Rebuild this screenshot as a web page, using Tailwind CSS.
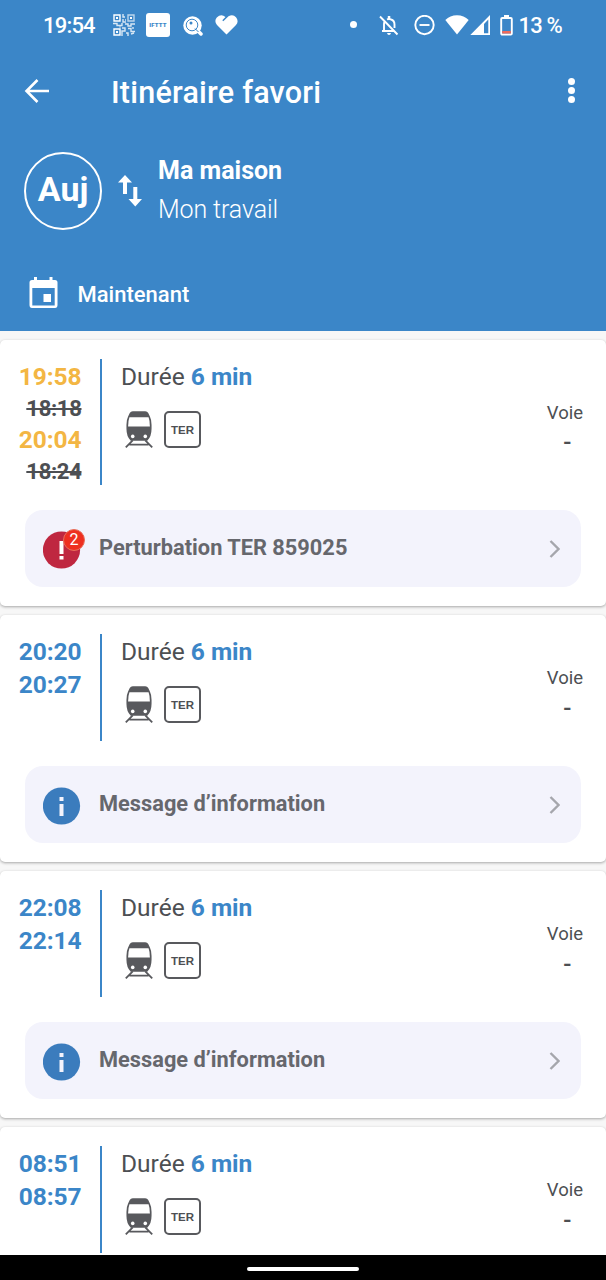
<!DOCTYPE html>
<html lang="fr">
<head>
<meta charset="utf-8">
<title>Itinéraire favori</title>
<script src="https://cdn.jsdelivr.net/npm/@tailwindcss/browser@4"></script>
</head>
<body class="w-[606px] h-[1280px] overflow-hidden bg-[#f7f7f7] font-['Roboto',sans-serif] text-[#4d4f53] flex flex-col">
<svg class="hidden">
  <symbol id="train" viewBox="75 32 84 112">
    <path fill="#58595d" d="M98 33h38q6 0 9 5l5 11q5 10 5 25v12q0 24-13 36H92q-13-12-13-36V74q0-15 5-25l5-11q3-5 9-5z"/>
    <path fill="#fff" d="M88 51h58q4 11 4 28H84q0-17 4-28z"/>
    <circle cx="98" cy="109" r="5.500" fill="#fff"/><circle cx="136" cy="109" r="5.500" fill="#fff"/>
    <path fill="none" stroke="#58595d" stroke-width="5.500" d="M98 121 77 142M136 121l21 21M88 134h58"/>
  </symbol>
  <symbol id="info" viewBox="0 0 38 38"><circle cx="18.500" cy="19" r="18.600" fill="#3b7cbd"/><path fill="#f3f3fc" d="M16.500 10h4v4h-4zM16.500 17h4v12h-4z"/></symbol>
  <symbol id="chev" viewBox="0 0 12 20"><path d="M2.500 2 10.500 10l-8 8" fill="none" stroke="#a5a6ac" stroke-width="2.400"/></symbol>
</svg>

<header class="h-[331px] shrink-0 bg-[#3b86c8] text-white flex flex-col">
  <div class="h-[50px] flex items-center pl-[43px] pr-[44px] text-[22px] font-medium">
    <span class="w-[70px] mt-px tracking-[-0.8px]">19:54</span>
    <svg class="w-[22px] h-[22px] shrink-0" viewBox="0 0 22 22" fill="none" stroke="#fff" stroke-width="1.400">
      <path d="M1 1h6v6H1zM1 15h6v6H1z"/><path opacity=".65" d="M15 1h6v6h-6z"/>
      <path stroke-width="2" d="M3 4h2M3 18h2M17 4h2"/>
      <path opacity=".8" d="M10 0v3h2M10 5v3h3M0 9.500h4v2h5V9M12 10h3v2h3v-2h4M9 14h3v3H9v5M13 19h2v3M15 14.500h3v3h4M18 20l3-1M7 12.500v1M20 13v2M12 6h1"/>
    </svg>
    <span class="ml-[11px] size-[24px] shrink-0 rounded-[3px] bg-white text-[#3b86c8] text-[6px] leading-[24px] font-black text-center tracking-[0.2px]">IFTTT</span>
    <svg class="ml-[13px] w-[20px] h-[22px] shrink-0" viewBox="0 0 20 22">
      <circle cx="9.500" cy="11.500" r="9.200" fill="#fff"/><path d="m14 16 4 4" stroke="#fff" stroke-width="3.500" stroke-linecap="round"/>
      <circle cx="9" cy="11" r="5.800" fill="none" stroke="#3b86c8" stroke-width="1"/><circle cx="8" cy="9" r="1.500" fill="#3b86c8"/><path d="m12 14.500 3.500 3.500" stroke="#3b86c8"/>
    </svg>
    <svg class="ml-[12px] w-[23px] h-[20px] shrink-0" viewBox="0 0 23 20"><path fill="#fff" d="M11.500 19.500 2 10Q-1.200 6 1.800 2.500 6-1.500 10.500 2L7.300 5.200 8.300 6.200 13.500 1.200Q18-1.200 21 2.200q3.200 4 0 7.800z"/></svg>
    <span class="ml-auto -mt-[2px] size-[7px] rounded-full bg-white"></span>
    <svg class="ml-[22px] w-[20px] h-[21px] shrink-0" viewBox="0 0 20 21" fill="none" stroke="#fff" stroke-width="1.900"><path d="M1 1.500 18.500 19.500M3 16h12M5 16V9q0-2 1-3M8 4.500q2-1 4 0 3.500 1 3.500 5V13"/><path fill="#fff" stroke="none" d="M8.800 1h2.500v3H8.800zM8 18h4q-.5 2-2 2t-2-2z"/></svg>
    <svg class="ml-[15px] w-[21px] h-[21px] shrink-0" viewBox="0 0 21 21" fill="none" stroke="#fff" stroke-width="1.900"><circle cx="10.500" cy="10" r="9.200"/><path d="M5.500 10h10"/></svg>
    <svg class="ml-[10px] w-[24px] h-[20px] shrink-0" viewBox="0 0 24 20"><path fill="#fff" d="M12 19.500.3 5Q5 .2 12 .2T23.700 5z"/></svg>
    <svg class="ml-px w-[21px] h-[20px] shrink-0" viewBox="0 0 21 20"><path fill="#fff" d="M20 0V20H.300zM18.300 4.500l-4.300 4.500v9.300h4.300z" fill-rule="evenodd"/></svg>
    <svg class="ml-[9px] w-[13px] h-[21px] shrink-0" viewBox="0 0 13 21"><path fill="#fff" d="M4 0h5v3H4z"/><rect x="1.200" y="3" width="10.600" height="16.500" rx="1" fill="none" stroke="#fff" stroke-width="1.900"/><path fill="#ee6a5c" d="M2.200 16h8.600v2.500H2.200z"/></svg>
    <span class="ml-[6px] mt-px whitespace-nowrap tracking-[-0.800px]">13 %</span>
  </div>

  <div class="h-[84px] flex items-center pl-[24px] pr-[31px]">
    <svg class="w-[26px] h-[26px] -mt-[3px]" viewBox="0 0 26 26" fill="none" stroke="#fff" stroke-width="2.600"><path d="M25 13H3M13.500 2 2.500 13l11 11"/></svg>
    <h1 class="ml-[61px] mt-px text-[30.500px] leading-[36px] font-medium whitespace-nowrap tracking-[0.220px]">Itinéraire favori</h1>
    <div class="ml-auto flex flex-col gap-[2.500px] -mt-[3px]"><i class="size-[6.800px] rounded-full bg-white"></i><i class="size-[6.800px] rounded-full bg-white"></i><i class="size-[6.800px] rounded-full bg-white"></i></div>
  </div>

  <div class="h-[114px] flex items-center pl-[24px]">
    <div class="size-[78px] rounded-full border-2 border-white text-[34px] font-bold text-center leading-[71px]">Auj</div>
    <svg class="ml-[16px] w-[25px] h-[32px]" viewBox="0 0 25 32"><path fill="#fff" d="M7 0l7 7.500H9V19H5V7.500H0zM15.300 12h4v12H24l-6.700 7.500L10.500 24h4.800z"/></svg>
    <div class="ml-[15px] -mt-[2px]">
      <div class="text-[25px] leading-[39px] font-bold whitespace-nowrap">Ma maison</div>
      <div class="text-[25px] leading-[39px] font-light whitespace-nowrap tracking-[-0.1px]">Mon travail</div>
    </div>
  </div>

  <div class="h-[83px] pt-[10px] flex items-center pl-[29px] text-[22px] font-medium">
    <svg class="w-[29px] h-[32px] -mt-[4px]" viewBox="0 0 29 32"><path fill="#fff" fill-rule="evenodd" d="M5 0h3v3h12.500V0h3v3H26q2.500 0 2.500 2.500V28q0 3-2.500 3H3q-2.500 0-2.500-3V5.500Q.5 3 3 3h2zM3.300 11v17.500h22.400V11zM14.500 17H22v8h-7.500z"/></svg>
    <span class="ml-[19.500px]">Maintenant</span>
  </div>
</header>

<main class="h-[924px] shrink-0 overflow-hidden pt-[9px] flex flex-col gap-[9px]">
  <section class="h-[266px] shrink-0 rounded-[5px] bg-white pt-[19px] shadow-[0_1px_3px_rgba(0,0,0,0.33)]">
    <div class="h-[126px] flex pr-[23px]">
      <div class="w-[102px] border-r-2 border-[#3b86c8] pr-[18.500px] pt-[2px] text-right text-[24.500px] leading-[31.500px] font-bold text-[#f3b643] tracking-[-0.100px]">
        <div>19:58</div><div class="text-[22px] text-[#4d4f53] line-through decoration-[1.500px] tracking-[-0.300px]">18:18</div><div>20:04</div><div class="text-[22px] text-[#4d4f53] line-through decoration-[1.500px] tracking-[-0.300px]">18:24</div>
      </div>
      <div class="pl-[19px]">
        <div class="pt-px text-[24.500px] leading-[34px] whitespace-nowrap">Durée <b class="text-[#3b86c8]">6 min</b></div>
        <div class="mt-[17px] pl-[4px] flex gap-[11px]"><svg class="w-[28px] h-[37px]"><use href="#train"/></svg><span class="size-[37px] rounded-[5px] border-2 border-[#58595d] text-[11.500px] leading-[34px] text-center font-bold font-['Liberation_Sans',sans-serif]">TER</span></div>
      </div>
      <div class="ml-auto self-center pt-[12px] text-center leading-[29.500px]"><div class="text-[18.500px]">Voie</div><div class="pl-[5px] text-[24px] font-medium">-</div></div>
    </div>
    <div class="mt-[25px] mx-[25px] h-[77px] rounded-[18px] bg-[#f3f3fc] flex items-center pl-[18px] pr-[21px] text-[21.800px] font-bold text-[#66676d]">
      <div class="relative mt-[3px] size-[38px]">
        <svg class="size-[38px]" viewBox="0 0 38 38"><circle cx="18.500" cy="19" r="18.600" fill="#bf2740"/><path fill="#fff" d="M16.500 10h4v13h-4zM16.500 25h4v3.500h-4z"/></svg>
        <span class="absolute -top-[2px] left-[20px] size-[22px] rounded-full bg-[#ee2f20] border border-[#e8705c] text-white text-[16px] leading-[20px] font-normal text-center">2</span>
      </div>
      <span class="ml-[18px] whitespace-nowrap">Perturbation TER 859025</span>
      <svg class="ml-auto w-[12px] h-[20px]"><use href="#chev"/></svg>
    </div>
  </section>

  <section class="h-[247px] shrink-0 rounded-[5px] bg-white pt-[19px] shadow-[0_1px_3px_rgba(0,0,0,0.33)]">
    <div class="h-[107px] flex pr-[23px]">
      <div class="w-[102px] border-r-2 border-[#3b86c8] pr-[18.500px] pt-px text-right text-[24.500px] leading-[33px] font-bold text-[#3b86c8] tracking-[-0.100px]"><div>20:20</div><div>20:27</div></div>
      <div class="pl-[19px]">
        <div class="pt-px text-[24.500px] leading-[34px] whitespace-nowrap">Durée <b class="text-[#3b86c8]">6 min</b></div>
        <div class="mt-[17px] pl-[4px] flex gap-[11px]"><svg class="w-[28px] h-[37px]"><use href="#train"/></svg><span class="size-[37px] rounded-[5px] border-2 border-[#58595d] text-[11.500px] leading-[34px] text-center font-bold font-['Liberation_Sans',sans-serif]">TER</span></div>
      </div>
      <div class="ml-auto self-center pt-[12px] text-center leading-[29.500px]"><div class="text-[18.500px]">Voie</div><div class="pl-[5px] text-[24px] font-medium">-</div></div>
    </div>
    <div class="mt-[25px] mx-[25px] h-[77px] rounded-[18px] bg-[#f3f3fc] flex items-center pl-[18px] pr-[21px] text-[21.800px] font-bold text-[#66676d]">
      <svg class="mt-[3px] size-[38px]"><use href="#info"/></svg>
      <span class="ml-[18px] whitespace-nowrap">Message d’information</span>
      <svg class="ml-auto w-[12px] h-[20px]"><use href="#chev"/></svg>
    </div>
  </section>

  <section class="h-[247px] shrink-0 rounded-[5px] bg-white pt-[19px] shadow-[0_1px_3px_rgba(0,0,0,0.33)]">
    <div class="h-[107px] flex pr-[23px]">
      <div class="w-[102px] border-r-2 border-[#3b86c8] pr-[18.500px] pt-px text-right text-[24.500px] leading-[33px] font-bold text-[#3b86c8] tracking-[-0.100px]"><div>22:08</div><div>22:14</div></div>
      <div class="pl-[19px]">
        <div class="pt-px text-[24.500px] leading-[34px] whitespace-nowrap">Durée <b class="text-[#3b86c8]">6 min</b></div>
        <div class="mt-[17px] pl-[4px] flex gap-[11px]"><svg class="w-[28px] h-[37px]"><use href="#train"/></svg><span class="size-[37px] rounded-[5px] border-2 border-[#58595d] text-[11.500px] leading-[34px] text-center font-bold font-['Liberation_Sans',sans-serif]">TER</span></div>
      </div>
      <div class="ml-auto self-center pt-[12px] text-center leading-[29.500px]"><div class="text-[18.500px]">Voie</div><div class="pl-[5px] text-[24px] font-medium">-</div></div>
    </div>
    <div class="mt-[25px] mx-[25px] h-[77px] rounded-[18px] bg-[#f3f3fc] flex items-center pl-[18px] pr-[21px] text-[21.800px] font-bold text-[#66676d]">
      <svg class="mt-[3px] size-[38px]"><use href="#info"/></svg>
      <span class="ml-[18px] whitespace-nowrap">Message d’information</span>
      <svg class="ml-auto w-[12px] h-[20px]"><use href="#chev"/></svg>
    </div>
  </section>

  <section class="h-[247px] shrink-0 rounded-[5px] bg-white pt-[19px] shadow-[0_1px_3px_rgba(0,0,0,0.33)]">
    <div class="h-[107px] flex pr-[23px]">
      <div class="w-[102px] border-r-2 border-[#3b86c8] pr-[18.500px] pt-px text-right text-[24.500px] leading-[33px] font-bold text-[#3b86c8] tracking-[-0.100px]"><div>08:51</div><div>08:57</div></div>
      <div class="pl-[19px]">
        <div class="pt-px text-[24.500px] leading-[34px] whitespace-nowrap">Durée <b class="text-[#3b86c8]">6 min</b></div>
        <div class="mt-[17px] pl-[4px] flex gap-[11px]"><svg class="w-[28px] h-[37px]"><use href="#train"/></svg><span class="size-[37px] rounded-[5px] border-2 border-[#58595d] text-[11.500px] leading-[34px] text-center font-bold font-['Liberation_Sans',sans-serif]">TER</span></div>
      </div>
      <div class="ml-auto self-center pt-[12px] text-center leading-[29.500px]"><div class="text-[18.500px]">Voie</div><div class="pl-[5px] text-[24px] font-medium">-</div></div>
    </div>
  </section>
</main>

<nav class="h-[25px] shrink-0 bg-black flex justify-center pt-[12px]"><span class="w-[112px] h-[4px] rounded-full bg-white"></span></nav>
</body>
</html>
